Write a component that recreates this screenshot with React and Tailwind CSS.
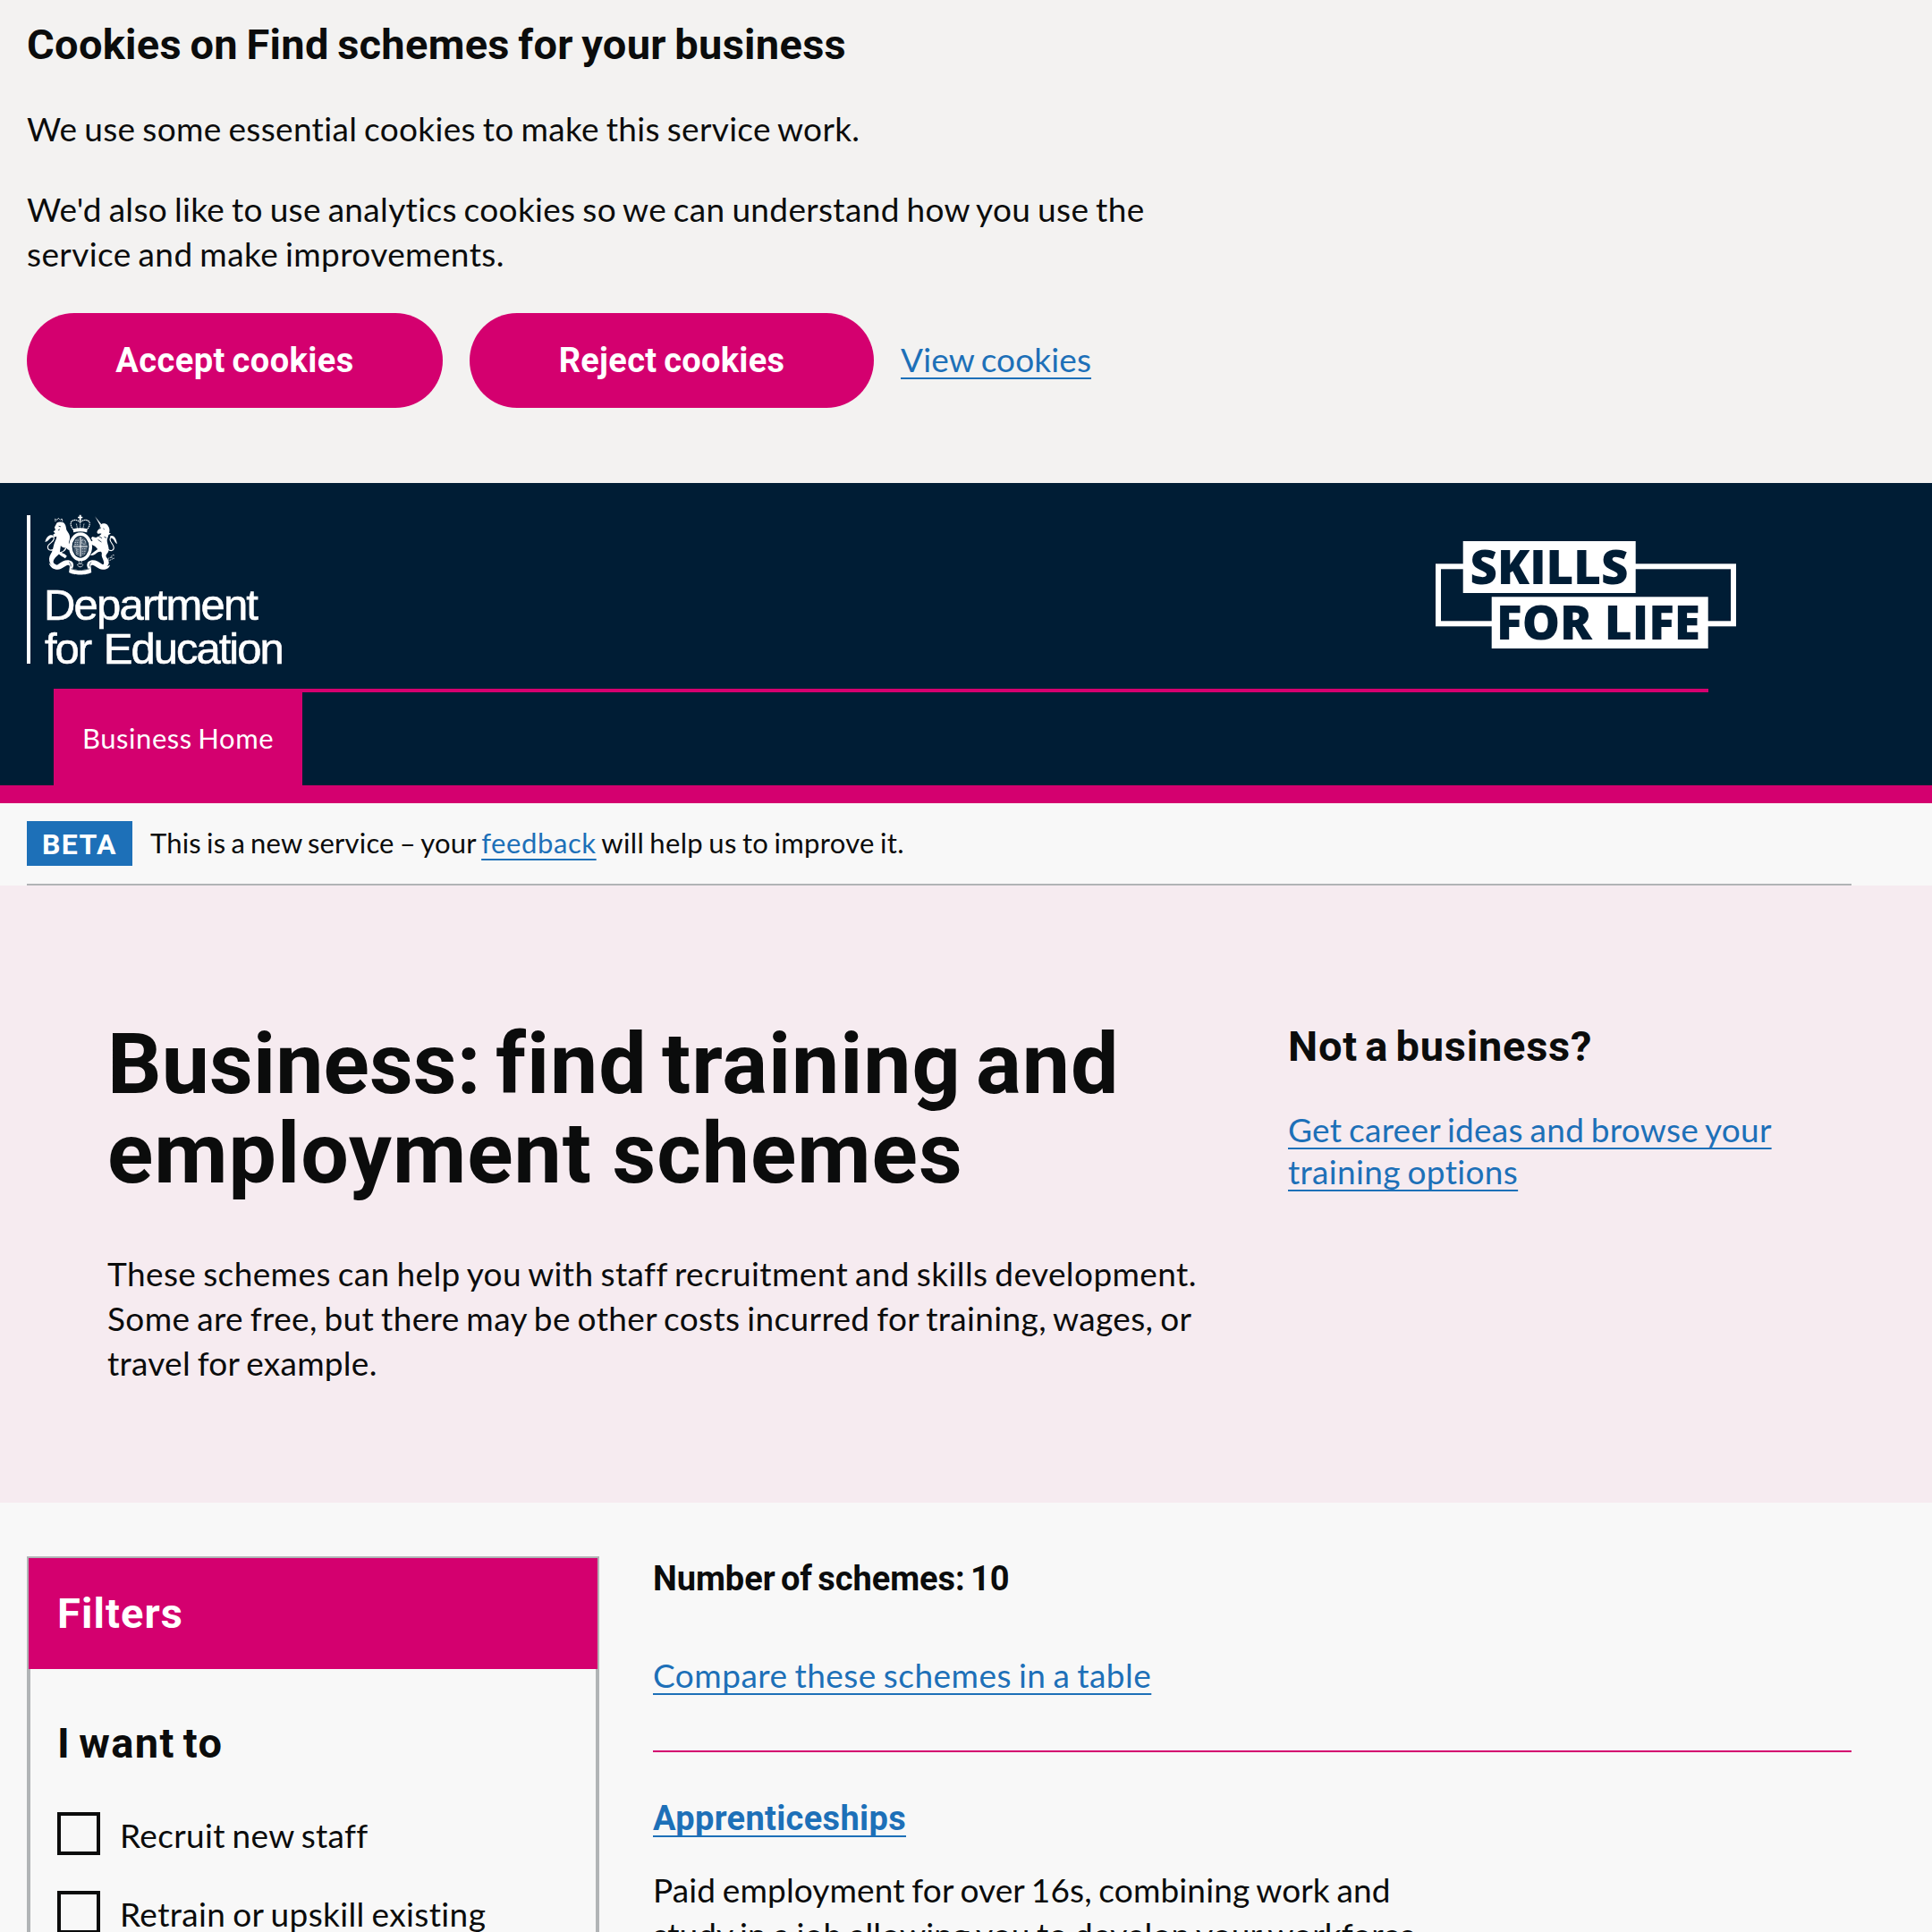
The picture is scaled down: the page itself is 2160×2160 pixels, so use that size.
import React from 'react';

const REG = "font-['Lato','Noto_Sans',sans-serif] font-normal";
const BOLD = "font-['Roboto','Noto_Sans',sans-serif] font-bold";
const LINK = 'text-[#1d70b8] underline decoration-2 underline-offset-[6px] [text-decoration-skip-ink:none]';

function Body({ className, children, as: Tag = 'p' }) {
  return (
    <Tag className={`${REG} text-[37px] leading-[50px] [word-spacing:-2px] whitespace-nowrap ${className || ''}`}>
      {children}
    </Tag>
  );
}

function Crest() {
  return (
    <svg className="block" width="82" height="68" viewBox="149 104 248 206" fill="#fff">
      {/* crown */}
      <path d="M266 106h6v6h5v5h-5v8h-6v-8h-5v-5h5z" />
      <path d="M246 156c-10-12-13-26-2-31 9-4 19 0 25 6 6-6 16-10 25-6 11 5 8 19-2 31" fill="none" stroke="#fff" strokeWidth="3.5" strokeDasharray="5 1.5" />
      <path d="M269 126v28M256 136l4 18M282 136l-4 18" fill="none" stroke="#fff" strokeWidth="2.5" strokeDasharray="4 2" />
      <path d="M245 153c16-4 32-4 48 0l-1 12c-15-4-31-4-46 0z" />
      {/* garter and shield */}
      <ellipse cx="270" cy="214" rx="34" ry="43" fill="none" stroke="#fff" strokeWidth="11" />
      <ellipse cx="270" cy="214" rx="25" ry="34" fill="#44586b" />
      <path d="M270 180v68M246 213h48" stroke="#fff" strokeWidth="3" />
      <path d="M252 192h13M250 199h15M250 206h15M275 190l12 4-2 12-10-3zM253 220h4v20M261 220v22M275 221h15M275 229h13M275 237h10" fill="none" stroke="#cfd7de" strokeWidth="2.6" strokeDasharray="5 2" />
      {/* lion */}
      <path d="M185 128l-1-8 6 3 5-6 6 6 6-4 2 9" fill="none" stroke="#fff" strokeWidth="3" strokeDasharray="4 1.5" />
      <path d="M190 133c8-5 22-4 27 4 4 6 4 14 6 21 6 9 12 17 11 27-1 7-4 12-4 19-1 8 2 14 5 20-6 2-10-2-12-6-3 8-10 12-17 16 7 3 15 6 18 12l-6 7c-7-4-16-8-21-14-8 8-19 16-19 27 1 6 10 8 15 12-9 5-20 2-25-6-6-11-5-24 1-33 7-10 8-22 11-33 3-10 9-18 9-27l-10 3-2-9 7-5-6-6 7-5-3-9z" />
      <path d="M219 196c5 2 10 6 15 10l-4 8-20-7z" />
      <path d="M203 210c4 6 11 8 17 7l-10 12-10 3z" fill="#001d35" />
      <path d="M196 144l7 2M194 158l6-3" stroke="#001d35" strokeWidth="2.5" />
      <path d="M177 224c-10 4-18 0-18-9 0-12 20-15 21-28 1-7-5-9-10-6" fill="none" stroke="#fff" strokeWidth="3.5" />
      <path d="M150 198c2-10 6-18 14-22 6-2 12-2 14 3-6 5-10 4-14 10-4 5-8 8-14 9z" />
      {/* unicorn */}
      <path d="M319 111l22 27-5 3z" />
      <path d="M336 140c8-7 20-6 26 1 6 7 8 17 5 26l6 2-8 5c-1 8-6 13-5 21 1 11 8 22 5 33-2 8-9 10-9 18 3 8 14 18 9 27-2 5-9 9-13 12-6-1-12-3-16-7 8-1 15-4 13-12-1-7-5-13-7-20-1-6 2-12-2-15-7-2-14 3-20 8-5 4-12 5-17 3 8-8 17-14 25-20-4-6-8-11-15-13l-10-5v-7l8-4-5-8 4-5 12 3c7-4 14-6 19-13-5-2-9 1-13-1-5-5 1-13 8-18z" />
      <path d="M347 152l4 3M338 148l-2 6M331 178l12 7M329 190l12 8M350 180l8 4" stroke="#001d35" strokeWidth="2.4" />
      <path d="M362 222c10 8 20 6 21-4 1-12-13-17-13-29 0-7 6-10 12-7" fill="none" stroke="#fff" strokeWidth="3.5" />
      <path d="M394 205c-2-11-4-20-11-26-5-3-11-4-14 1 4 6 11 5 14 11 3 5 5 10 11 14z" />
      <path d="M345 248c6 8 14 10 22 4l10-4M384 243a6 6 0 1 0 1 9M356 254l12 6 10-4" fill="none" stroke="#fff" strokeWidth="2.5" strokeDasharray="5 2" />
      {/* pendant */}
      <path d="M269 258l6 7-6 6-6-6zM260 276c0-5 6-6 9-3 3-3 9-2 9 3l-5 6h-8z" fill="none" stroke="#fff" strokeWidth="3" strokeDasharray="4 1.5" />
      {/* ribbon */}
      <path d="M163 268c8 10 20 14 32 5 12-9 23-15 37-13 10 2 15 9 14 18l-3 10c16 6 36 6 52 0l-3-10c-1-9 4-16 14-18 14-2 25 4 37 13 10 7 20 8 27 2-2 11-14 17-25 16-15-1-22-12-34-15-5-1-7 3-6 7l2 18c-14 10-62 10-76 0l2-17c1-5-1-9-6-8-12 3-19 14-34 15-15 0-26-8-30-23z" />
      <path d="M238 288c19 7 43 7 62 0" fill="none" stroke="#001d35" strokeWidth="2.2" />
      <path d="M231 266c5 3 7 9 6 15M307 266c-5 3-7 9-6 15" fill="none" stroke="#001d35" strokeWidth="2" />
    </svg>
  );
}

function SkillsLogo() {
  return (
    <svg className="block" width="336" height="120" viewBox="0 0 336 120">
      <rect x="3" y="28.3" width="330" height="64" fill="none" stroke="#fff" strokeWidth="6" />
      <rect x="30.7" y="0" width="193" height="58" fill="#fff" />
      <rect x="62.7" y="62.3" width="242" height="57.7" fill="#fff" />
      <g fill="#001d35" fontFamily="'Open Sans', sans-serif" fontWeight="800" fontSize="53.5">
        <text x="38.5" y="48" textLength="177" lengthAdjust="spacingAndGlyphs">SKILLS</text>
        <text x="68" y="110" textLength="228" lengthAdjust="spacingAndGlyphs">FOR LIFE</text>
      </g>
    </svg>
  );
}

function CookieBanner() {
  return (
    <section className="h-[540px] bg-[#f3f2f1] px-[30px] pt-5">
      <h2 className={`${BOLD} text-[47px] leading-[60px] tracking-[0.3px] [word-spacing:-2.5px]`}>
        Cookies on Find schemes for your business
      </h2>
      <Body className="mt-[39px] tracking-[0.34px]">We use some essential cookies to make this service work.</Body>
      <Body className="mt-10 tracking-[0.34px]">We'd also like to use analytics cookies so we can understand how you use the</Body>
      <Body className="tracking-[0.4px]">service and make improvements.</Body>
      <div className="mt-[41px] flex items-center gap-[30px]">
        <button className={`${BOLD} h-[106px] w-[465px] rounded-full bg-[#d4006f] pt-px text-[38px] tracking-[0.43px] text-white [word-spacing:-2px]`}>
          Accept cookies
        </button>
        <button className={`${BOLD} h-[106px] w-[452px] rounded-full bg-[#d4006f] pt-px text-[38px] tracking-[0.3px] text-white [word-spacing:-2px]`}>
          Reject cookies
        </button>
        <Body as="a" className={`mb-0.5 tracking-[0.12px] ${LINK}`}>View cookies</Body>
      </div>
    </section>
  );
}

function Header() {
  return (
    <header className="flex h-[358px] flex-col border-b-[20px] border-[#d4006f] bg-[#001d35]">
      <div className="flex h-[230px] items-start justify-between pl-[30px] pr-[219px]">
        <div className="mt-9 flex h-[166px] border-l-4 border-white pl-4">
          <div className="-mt-px">
            <Crest />
            <div className="mt-[9px] whitespace-nowrap font-['Liberation_Sans',Arial,sans-serif] text-[49px] leading-[49px] text-white [-webkit-text-stroke:0.6px_white]">
              <div className="-ml-px tracking-[-1.78px]">Department</div>
              <div className="tracking-[-2px] [word-spacing:3px]">for Education</div>
            </div>
          </div>
        </div>
        <div className="mt-[65px]">
          <SkillsLogo />
        </div>
      </div>
      <nav className="ml-[60px] flex w-[1850px] flex-1 border-t-4 border-[#d4006f]">
        <a className={`${REG} flex w-[278px] items-center bg-[#d4006f] pb-0.5 pl-8 text-[31px] tracking-[0.55px] text-white [word-spacing:-2px]`}>
          Business Home
        </a>
      </nav>
    </header>
  );
}

function PhaseBanner() {
  return (
    <div className="ml-[30px] flex h-[92px] w-[2040px] items-start border-b-2 border-[#b1b4b6] pt-5">
      <strong className={`${BOLD} flex h-[50px] w-[118px] items-center justify-center bg-[#1d70b8] pt-px text-[32px] leading-[50px] tracking-[1.4px] text-white`}>
        BETA
      </strong>
      <span className={`${REG} ml-5 whitespace-nowrap text-[31px] leading-[48px] tracking-[0.18px] [word-spacing:-2px]`}>
        This is a new service – your <a className={`tracking-[0.6px] ${LINK}`}>feedback</a>
        <span className="tracking-[0.33px]"> will help us to improve it.</span>
      </span>
    </div>
  );
}

function Hero() {
  return (
    <section className="flex h-[690px] bg-[#f6ebf0] pl-[120px] pt-[150px]">
      <div className="w-[1320px]">
        <h1 className={`${BOLD} whitespace-nowrap text-[95px] leading-[100px]`}>
          <span className="block tracking-[0.9px] [word-spacing:-8px]">
            <span className="tracking-[0.1px]">Business:</span> find training and
          </span>
          <span className="block tracking-[1px] [word-spacing:-2px]">employment schemes</span>
        </h1>
        <Body className="mt-[59px] tracking-[0.4px]">These schemes can help you with staff recruitment and skills development.</Body>
        <Body className="tracking-[0.36px]">Some are free, but there may be other costs incurred for training, wages, or</Body>
        <Body className="tracking-[0.27px]">travel for example.</Body>
      </div>
      <aside>
        <h2 className={`${BOLD} text-[47px] leading-[60px] tracking-[0.75px] [word-spacing:-4px]`}>Not a business?</h2>
        <a className={`${REG} mt-[38.5px] block whitespace-nowrap text-[37px] leading-[47.5px] [word-spacing:-2px]`}>
          <span className={`tracking-[0.27px] ${LINK}`}>Get career ideas and browse your</span>
          <br />
          <span className={`tracking-[0.33px] ${LINK}`}>training options</span>
        </a>
      </aside>
    </section>
  );
}

function Option({ children, className }) {
  return (
    <label className="mb-10 flex h-12 items-start">
      <span className="h-12 w-12 shrink-0 border-4 border-[#0b0c0c]" />
      <Body as="span" className={`ml-[22px] mt-px ${className}`}>{children}</Body>
    </label>
  );
}

function Filters() {
  return (
    <aside className="h-[900px] w-[640px] border-2 border-[#b1b4b6]">
      <h2 className={`${BOLD} flex h-[124px] items-center bg-[#d4006f] pl-8 text-[47px] tracking-[1.1px] text-white`}>Filters</h2>
      <div className="h-full border-x-2 border-[#b1b4b6] pl-[30px] pt-[53px]">
        <h3 className={`${BOLD} text-[47px] leading-[60px] tracking-[1.4px] [word-spacing:-4px]`}>I want to</h3>
        <div className="mt-[47px]">
          <Option className="tracking-[0.33px]">Recruit new staff</Option>
          <Option className="tracking-[0.38px]">Retrain or upskill existing</Option>
        </div>
      </div>
    </aside>
  );
}

function Results() {
  return (
    <main className="w-[1340px]">
      <p className={`${BOLD} text-[38px] leading-[50px] tracking-[-0.05px] [word-spacing:-3px]`}>Number of schemes: 10</p>
      <Body className="mt-[58px] tracking-[0.48px]"><a className={LINK}>Compare these schemes in a table</a></Body>
      <hr className="mt-[59px] border-t-2 border-[#d4006f]" />
      <h3 className={`${BOLD} mt-[49px] text-[38px] leading-[50px] tracking-[0.33px]`}><a className={LINK}>Apprenticeships</a></h3>
      <Body className="mt-[30px] tracking-[0.14px]">Paid employment for over 16s, combining work and</Body>
      <Body className="tracking-[0.12px]">study in a job allowing you to develop your workforce</Body>
    </main>
  );
}

export default function App() {
  return (
    <div className="h-[2160px] w-[2160px] overflow-hidden bg-[#f8f8f8] text-[#0b0c0c]">
      <CookieBanner />
      <Header />
      <PhaseBanner />
      <Hero />
      <div className="flex gap-[60px] pl-[30px] pt-[60px]">
        <Filters />
        <Results />
      </div>
    </div>
  );
}
